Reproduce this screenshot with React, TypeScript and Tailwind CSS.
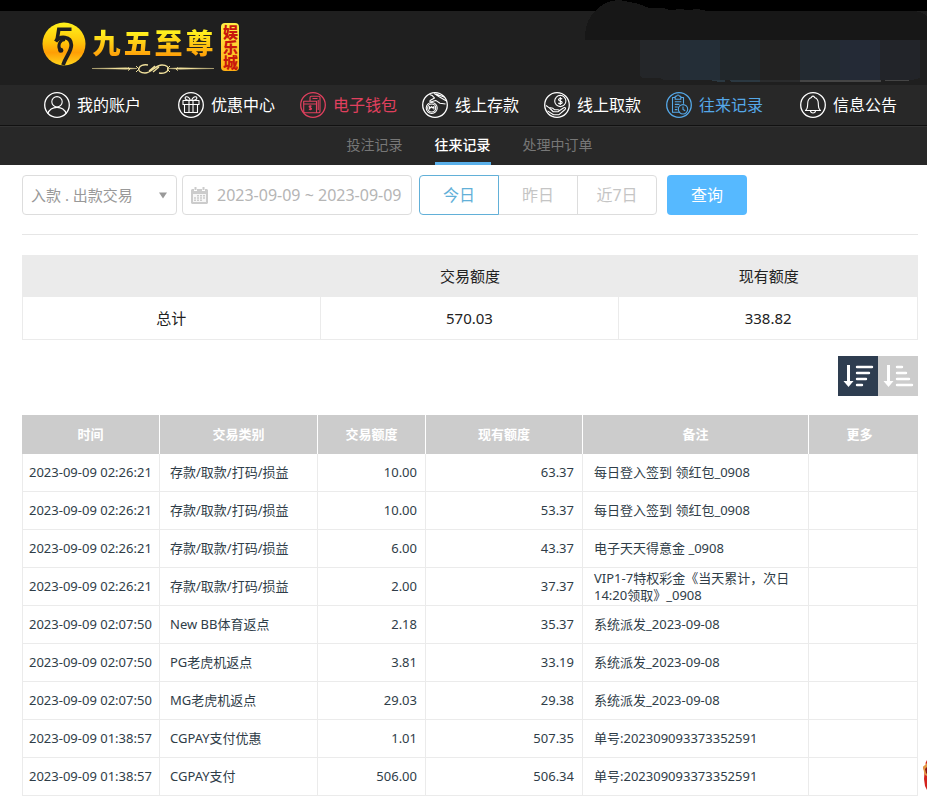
import { useState } from 'react';
import type { ReactNode } from 'react';
import clsx from 'clsx';

interface NavItem {
  label: string;
  icon: ReactNode;
  color: string;
}

interface RecordRow {
  time: string;
  type: string;
  amount: string;
  balance: string;
  note: string;
}

const accountItem: NavItem = {
  label: '我的账户',
  color: 'text-white',
  icon: (
    <>
      <circle cx="13" cy="9.8" r="5.2" />
      <path d="M3.6 21.8C5.2 17.6 8.6 15.4 13 15.4s7.8 2.2 9.4 6.4" />
    </>
  ),
};

const middleItems: NavItem[] = [
  {
    label: '优惠中心',
    color: 'text-white',
    icon: (
      <>
        <path d="M5 8.5h16v4H5zM6.5 12.5h13v8h-13zM11 8.5v12M15 8.5v12" />
        <path d="M12.5 8.3C9.5 8.5 6.5 7.5 7.2 5.6c.9-2 4.3-.3 5.3 2.7zM13.5 8.3c3 .2 6-.8 5.3-2.7-.9-2-4.3-.3-5.3 2.7z" />
      </>
    ),
  },
  {
    label: '电子钱包',
    color: 'text-[#e0405e]',
    icon: (
      <>
        <path d="M10 9.3V5.5c0-.8.5-1.3 1.3-1.3h7.4c.8 0 1.3.5 1.3 1.3v14c0 .8-.5 1.3-1.3 1.3H5c-.8 0-1.3-.5-1.3-1.3V9.3h12.8v11.5" />
        <path d="M3.7 12h12.8M12.5 6.5h5M18.2 8v10" />
        <path d="M11.6 14.3c-1-.9-2.6-.5-2.5.5.1 1.1 2.5.7 2.5 1.9 0 1-1.7 1.2-2.6.3M10.3 13.3v5" />
      </>
    ),
  },
  {
    label: '线上存款',
    color: 'text-white',
    icon: (
      <>
        <circle cx="9.7" cy="16" r="5.5" />
        <circle cx="9.7" cy="16" r="4" />
        <path d="M7.5 17.5v-3l1.2 1.5 1-1.5 1 1.5 1.2-1.5v3" />
        <path d="M7.5 2.5c2.5.3 3.8 1.7 5 3.5l-4 2.3c-1.2.8-.6 2 .8 1.5l4.4-1.4 4.3 2.8 5.5.8M12.2 1.5l5 3.2 6.8 4M14 2l8 3" />
      </>
    ),
  },
  {
    label: '线上取款',
    color: 'text-white',
    icon: (
      <>
        <circle cx="16.3" cy="9" r="5.6" />
        <path d="M18.2 7.1c-1.3-1.2-3.8-.8-3.7.7.1 1.6 3.7 1 3.7 2.7 0 1.5-2.6 1.7-3.9.5M16.3 5v8" />
        <path d="M2 13.5l3.3 2.4c2-.6 3.8.1 5.4 1.9h3.4c1.4.2 1.3 1.8 0 1.9H9.5M14.8 19l5-3.3c1.5-.7 2.4.7 1.2 1.8l-6 5.2H9.5l-6-3.8M5.5 16l4 4" />
      </>
    ),
  },
  {
    label: '往来记录',
    color: 'text-[#55a8e8]',
    icon: (
      <>
        <path d="M9.2 5.5H6.5v14.8h7M14.8 5.5h2.7v6.3M9.2 4.2h1.4c.2-1.7 2.6-1.7 2.8 0h1.4v3H9.2z" />
        <path d="M8.8 9.8h6.5M8.8 12.4h4.7M8.8 15h3M8.8 17.6h2.5" />
        <circle cx="17" cy="17.3" r="4.7" />
        <path d="M17 14.5v3l2.2 1.2" />
      </>
    ),
  },
];

const noticeItem: NavItem = {
  label: '信息公告',
  color: 'text-white',
  icon: (
    <>
      <path d="M5.5 18.5c2.3-1.8 2.1-4 2.2-7.2.1-3.4 1.6-5.2 3.8-5.8.1-1.9 2.9-1.9 3 0 2.2.6 3.7 2.4 3.8 5.8.1 3.2-.1 5.4 2.2 7.2z" />
      <path d="M10.5 18.8c.2 3 4.8 3 5 0" />
    </>
  ),
};

const subTabs = ['投注记录', '往来记录', '处理中订单'];
const ranges = ['今日', '昨日', '近7日'];

const records: RecordRow[] = [
  { time: '2023-09-09 02:26:21', type: '存款/取款/打码/损益', amount: '10.00', balance: '63.37', note: '每日登入签到 领红包_0908' },
  { time: '2023-09-09 02:26:21', type: '存款/取款/打码/损益', amount: '10.00', balance: '53.37', note: '每日登入签到 领红包_0908' },
  { time: '2023-09-09 02:26:21', type: '存款/取款/打码/损益', amount: '6.00', balance: '43.37', note: '电子天天得意金 _0908' },
  { time: '2023-09-09 02:26:21', type: '存款/取款/打码/损益', amount: '2.00', balance: '37.37', note: 'VIP1-7特权彩金《当天累计，次日14:20领取》_0908' },
  { time: '2023-09-09 02:07:50', type: 'New BB体育返点', amount: '2.18', balance: '35.37', note: '系统派发_2023-09-08' },
  { time: '2023-09-09 02:07:50', type: 'PG老虎机返点', amount: '3.81', balance: '33.19', note: '系统派发_2023-09-08' },
  { time: '2023-09-09 02:07:50', type: 'MG老虎机返点', amount: '29.03', balance: '29.38', note: '系统派发_2023-09-08' },
  { time: '2023-09-09 01:38:57', type: 'CGPAY支付优惠', amount: '1.01', balance: '507.35', note: '单号:202309093373352591' },
  { time: '2023-09-09 01:38:57', type: 'CGPAY支付', amount: '506.00', balance: '506.34', note: '单号:202309093373352591' },
];

const cell = 'border-b border-r border-[#ebebeb] first:border-l';

function NavLink({ item }: { item: NavItem }) {
  return (
    <a href="#" className={clsx('flex shrink-0 items-center gap-[7px] text-base leading-6', item.color)}>
      <svg className="h-[26px] w-[26px]" viewBox="0 0 26 26" fill="none" stroke="currentColor" strokeWidth="1.1" strokeLinejoin="round">
        <circle cx="13" cy="13" r="12.3" strokeWidth="1.3" />
        {item.icon}
      </svg>
      {item.label}
    </a>
  );
}

function Logo() {
  return (
    <a href="#" className="flex items-start">
      <svg className="h-11 w-11" viewBox="0 0 44 44">
        <defs>
          <linearGradient id="gold" x1="0" y1="0" x2="0" y2="1">
            <stop offset="0" stopColor="#fff21c" />
            <stop offset="0.45" stopColor="#ffc60a" />
            <stop offset="0.7" stopColor="#ff9e05" />
            <stop offset="1" stopColor="#ffd51c" />
          </linearGradient>
        </defs>
        <circle cx="22" cy="22" r="21.5" fill="url(#gold)" />
        <g fill="none" stroke="#1f1f1f">
          <path d="M29.5 7.200H16.800L15 18.500" strokeWidth="3.600" />
          <path d="M13.600 19.500C18 13.500 29 14 29.300 23c.1 6.500-5 10.500-8.300 20" strokeWidth="3.800" />
          <path d="M23 17.500c-5.500.5-7.500 6-5 10.500" strokeWidth="3" />
        </g>
        <circle cx="18.800" cy="28.200" r="2.500" fill="#1f1f1f" />
      </svg>
      <span className="ml-[5px] flex flex-col items-center">
        <span className="flex gap-[3px] bg-gradient-to-b from-[#fff01e] from-25% to-[#ff9105] to-90% bg-clip-text text-[28px] leading-[42px] font-black text-transparent">
          <span>九</span>
          <span>五</span>
          <span>至</span>
          <span>尊</span>
        </span>
        <svg className="h-[10px] w-[124px]" viewBox="0 0 124 10" fill="none" stroke="#efdf9b">
          <path d="M1 4.500l34-.8L46 4.500l-11 .8zM123 4.500l-34-.8L78 4.500l11 .8z" fill="#efdf9b" strokeWidth="0.4" />
          <path d="M57 1c-10-2-13 8-3 8 7 0 10-8 17-8 10 0 7 10-3 8M58 7l6-5M62 8l6-5" strokeWidth="1.3" />
          <path d="M45 2l3 3-3 3M79 2l-3 3 3 3M37 3.500l2 1.500-2 1.500M87 3.500l-2 1.500 2 1.500" />
        </svg>
      </span>
      <span className="ml-[6px] mt-px flex h-12 w-[18px] items-center justify-center rounded-[4px] bg-gradient-to-b from-[#ffef45] to-[#ffae12] text-[15px] leading-[18px] font-black text-[#c8180c] [writing-mode:vertical-rl]">
        娱乐城
      </span>
    </a>
  );
}

function SortIcon({ descending }: { descending: boolean }) {
  return (
    <svg className="h-10 w-10" viewBox="0 0 40 40" fill="none" stroke="#fff">
      <path d="M10.500 9v18" strokeWidth="3" />
      <path d="M5.500 25h10l-5 6z" fill="#fff" stroke="none" />
      <path
        d={descending ? 'M19 11h15M19 17h12M19 23h9M19 29h5' : 'M19 11h5M19 17h9M19 23h12M19 29h15'}
        strokeWidth="2.400"
        strokeLinecap="round"
      />
    </svg>
  );
}

export default function App() {
  const [activeTab, setActiveTab] = useState('往来记录');
  const [range, setRange] = useState('今日');
  const [descending, setDescending] = useState(true);
  const [dates, setDates] = useState('2023-09-09 ~ 2023-09-09');

  return (
    <div className="relative overflow-hidden bg-white font-['Noto_Sans','Noto_Sans_CJK_SC',sans-serif]">
      {/* Header */}
      <header className="border-t-[11px] border-black bg-[#1f1f1f]">
        <div className="flex h-[74px] pl-[42px] pt-[11px]">
          <Logo />
        </div>
        <svg className="absolute right-0 top-0 h-[85px] w-[347px]" viewBox="0 0 347 85" shapeRendering="crispEdges">
          <path d="M60 40h40v40H84l-4-2H62l-2-3z" fill="#242629" />
          <path d="M100 40h40v40h-40z" fill="#242e37" />
          <path d="M140 40h40v40h-40z" fill="#21272b" />
          <path d="M180 40h40v40h-40z" fill="#222" />
          <path d="M220 40h40v40h-40z" fill="#232a31" />
          <path d="M260 40h40v40h-40z" fill="#242a36" />
          <path d="M300 40h40v38l-8 2h-32z" fill="#222429" />
          <path d="M130 80h15v1.500h-8zM149 80h31v2h-28z" fill="#2b3841" />
          <path d="M180 80h40v2h-40z" fill="#2b2c2d" />
          <path d="M220 80h81v2h-81zM305 80h24v1h-24z" fill="#454545" />
          <path d="M5 40V34C6 24 9 17 15 11 22 4 29 0 40 0c6 1 13 3 19 4l10 4h14l7 2 11-1 6 1 11-1 9 2h205c5 0 12 2 15 5v24z" fill="#171717" />
        </svg>
      </header>

      <nav className="flex h-10 items-center justify-between gap-4 bg-[#282828] pl-11 pr-[30px]">
        <NavLink item={accountItem} />
        <div className="flex gap-[25px]">
          {middleItems.map((item) => (
            <NavLink key={item.label} item={item} />
          ))}
        </div>
        <NavLink item={noticeItem} />
      </nav>

      <div className="flex h-10 justify-center gap-8 border-t border-[#111] bg-[#282828] pl-3 text-sm shadow-[inset_0_1px_0_#333]">
        {subTabs.map((tab) => (
          <button
            key={tab}
            type="button"
            onClick={() => setActiveTab(tab)}
            className={clsx(
              'border-b-[3px] pt-px',
              activeTab === tab ? 'border-[#5ab0ea] font-medium text-white' : 'border-transparent text-[#777]'
            )}
          >
            {tab}
          </button>
        ))}
      </div>

      <main className="pb-2 pl-[22px] pr-[9px]">
        {/* Filters */}
        <form className="flex border-b border-[#e6e6e6] pb-[19px] pt-[10px]" onSubmit={(e) => e.preventDefault()}>
          <div className="relative">
            <select aria-label="交易类别" className="h-10 w-[155px] appearance-none rounded-[4px] border border-[#ddd] bg-white px-2 text-[15px] text-[#999]">
              <option>入款 . 出款交易</option>
            </select>
            <svg className="pointer-events-none absolute right-[10px] top-[17px] h-[7px] w-2" viewBox="0 0 8 7">
              <path d="M0 0.500h8L4 6.500z" fill="#999" />
            </svg>
          </div>
          <label className="ml-[5px] flex h-10 w-[230px] items-center gap-[9px] rounded-[4px] border border-[#ddd] pl-2">
            <svg className="h-[17px] w-[17px] shrink-0" viewBox="0 0 17 17">
              <path d="M1 2h2v2h3V2h5v2h3V2h2l1 1v13l-1 1H1l-1-1V3z" fill="#ccc" />
              <path d="M3.500 0H5.500v3H3.500zM11.500 0h2v3h-2z" fill="#ccc" />
              <path d="M2 7h13v8H2z" fill="#f7f7f7" />
              <path d="M6 8h2v1.500H6zM9 8h2v1.500H9zM12 8h2v1.500h-2zM3 10.300h2v1.500H3zM6 10.300h2v1.500H6zM9 10.300h2v1.500H9zM12 10.300h2v1.500h-2zM3 12.600h2v1.500H3zM6 12.600h2v1.500H6zM9 12.600h2v1.500H9z" fill="#ccc" />
            </svg>
            <input
              type="text"
              aria-label="日期"
              value={dates}
              onChange={(e) => setDates(e.target.value)}
              className="w-full min-w-0 text-base text-[#b5b5b5] outline-none"
            />
          </label>
          <div className="ml-[7px] flex">
            {ranges.map((r) => (
              <button
                key={r}
                type="button"
                onClick={() => setRange(r)}
                className={clsx(
                  '-mr-px h-10 w-20 border text-base first:rounded-l-[4px] last:rounded-r-[4px]',
                  range === r ? 'relative border-[#62b0d8] text-[#62b0d8]' : 'border-[#ddd] text-[#c5c5c5]'
                )}
              >
                {r}
              </button>
            ))}
          </div>
          <button type="submit" className="ml-[11px] h-10 w-20 rounded-[4px] bg-[#56b9ff] text-base text-white">
            查询
          </button>
        </form>

        {/* Totals */}
        <table className="mt-5 w-full table-fixed border-separate border-spacing-0 text-center text-[15px] text-[#222]">
          <thead>
            <tr className="h-[42px] bg-[#ebebeb]">
              <th></th>
              <th className="font-normal">交易额度</th>
              <th className="font-normal">现有额度</th>
            </tr>
          </thead>
          <tbody>
            <tr className="h-[43px]">
              <td className={cell}>总计</td>
              <td className={cell}>570.03</td>
              <td className={cell}>338.82</td>
            </tr>
          </tbody>
        </table>

        <div className="mt-4 flex justify-end">
          <button type="button" aria-label="降序" onClick={() => setDescending(true)} className={descending ? 'bg-[#2e3d50]' : 'bg-[#ccc]'}>
            <SortIcon descending />
          </button>
          <button type="button" aria-label="升序" onClick={() => setDescending(false)} className={descending ? 'bg-[#ccc]' : 'bg-[#2e3d50]'}>
            <SortIcon descending={false} />
          </button>
        </div>

        {/* Transaction records */}
        <table className="mt-[19px] w-full table-fixed border-separate border-spacing-0 text-[13px] leading-[17px] text-[#2f3d48]">
          <colgroup>
            <col className="w-[138px]" />
            <col className="w-[158px]" />
            <col className="w-[108px]" />
            <col className="w-[157px]" />
            <col className="w-[226px]" />
            <col className="w-[109px]" />
          </colgroup>
          <thead>
            <tr className="h-[39px] bg-[#ccc] text-white">
              <th className="border-r border-white font-bold">时间</th>
              <th className="border-r border-white font-bold">交易类别</th>
              <th className="border-r border-white font-bold">交易额度</th>
              <th className="border-r border-white font-bold">现有额度</th>
              <th className="border-r border-white font-bold">备注</th>
              <th className="pr-2 font-bold">更多</th>
            </tr>
          </thead>
          <tbody>
            {(descending ? records : [...records].reverse()).map((row, i) => (
              <tr key={i} className="h-[38px]">
                <td className={clsx(cell, 'pl-[6px] whitespace-nowrap')}>{row.time}</td>
                <td className={clsx(cell, 'pl-[10px]')}>{row.type}</td>
                <td className={clsx(cell, 'pr-2 text-right')}>{row.amount}</td>
                <td className={clsx(cell, 'pr-2 text-right')}>{row.balance}</td>
                <td className={clsx(cell, 'pl-[11px] pr-3')}>{row.note}</td>
                <td className={cell}></td>
              </tr>
            ))}
          </tbody>
        </table>
      </main>

      {/* Red packet peeking in from the window edge */}
      <svg className="fixed bottom-[12px] right-0 h-8 w-1" viewBox="0 0 4 32">
        <path d="M4 1L2.500 4 3 6 0 8l1.500 5L1 20l1 7 2 4z" fill="#d3221c" />
        <path d="M4 4L0 8l1 5 1 3 2 1z" fill="#e39a45" />
        <path d="M4 8L2 10l1 4 1 1z" fill="#8e1414" />
      </svg>
    </div>
  );
}
